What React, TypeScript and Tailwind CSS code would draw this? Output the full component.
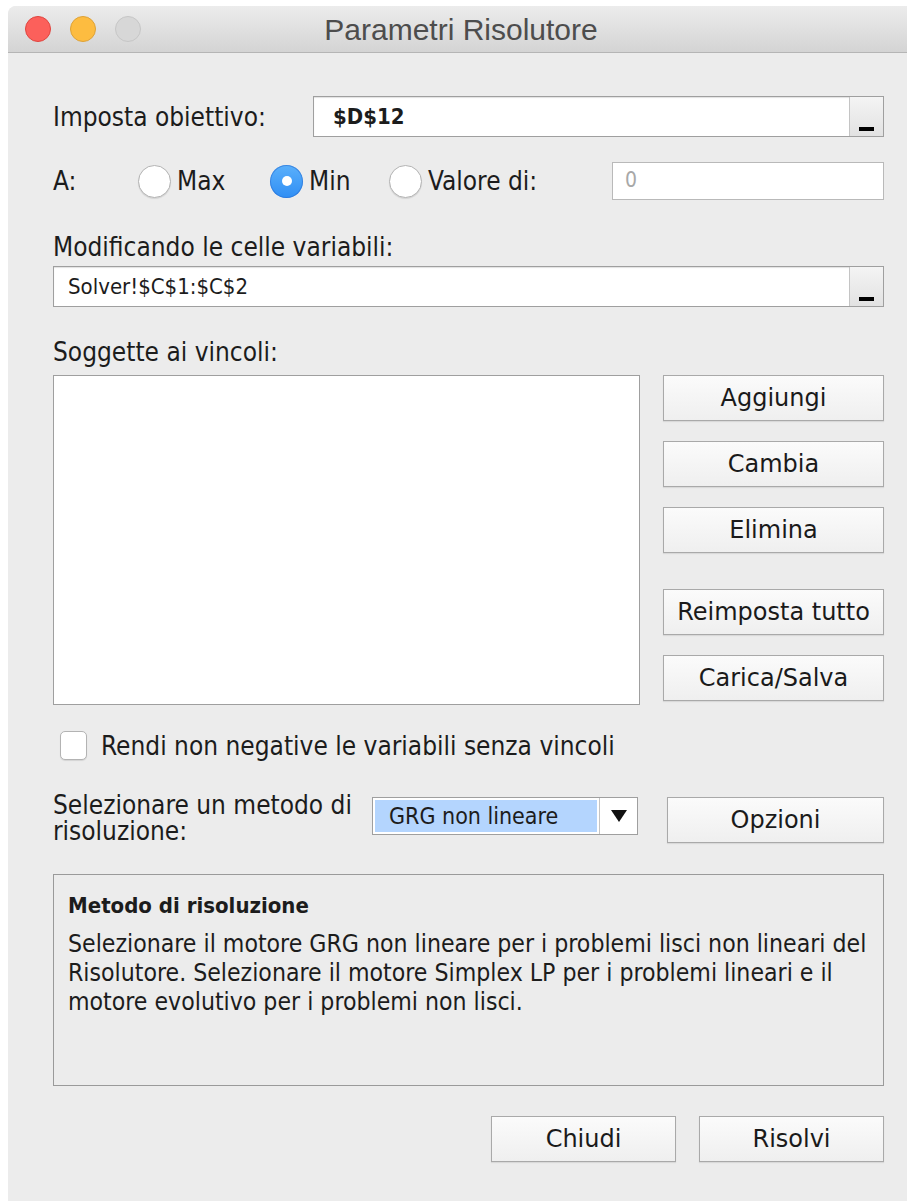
import { useState } from "react";

const label = "font-['DejaVu_Sans_Condensed','DejaVu_Sans',sans-serif] text-[26px] text-[#1c1c1c] leading-none";
const body = "font-['DejaVu_Sans_Condensed','DejaVu_Sans',sans-serif] text-[#1c1c1c]";
const btn =
  "flex items-center justify-center border border-[#a9a9a9] bg-gradient-to-b from-[#fbfbfb] to-[#efefef] shadow-[0_1px_1px_rgba(0,0,0,0.08)] font-['DejaVu_Sans',sans-serif] text-[24px] text-[#1a1a1a]";

function RefInput({ value, className, strong }: { value: string; className: string; strong?: boolean }) {
  return (
    <div className={`flex h-[41px] border border-[#9f9f9f] bg-white shadow-[inset_0_1px_1px_rgba(0,0,0,0.12)] ${className}`}>
      <div className={`flex flex-1 items-center ${strong ? "pl-[19px] font-bold" : "pl-[14px]"} ${body} text-[22px]`}>{value}</div>
      <div className="flex w-[34px] items-end justify-center border-l border-[#c4c4c4] bg-gradient-to-b from-[#f4f4f4] to-[#e2e2e2] pb-[5px]">
        <div className="h-[4px] w-[15px] bg-black" />
      </div>
    </div>
  );
}

function Radio({ checked, text, onClick, width }: { checked: boolean; text: string; onClick: () => void; width: string }) {
  return (
    <button onClick={onClick} className={`flex items-center gap-[6px] ${width}`}>
      {checked ? (
        <span className="flex h-[33px] w-[33px] shrink-0 items-center justify-center rounded-full bg-gradient-to-b from-[#5ab0fb] to-[#2f8ef4] shadow-[inset_0_0_0_1px_rgba(40,110,210,0.6)]">
          <span className="h-[10px] w-[10px] rounded-full bg-white" />
        </span>
      ) : (
        <span className="h-[33px] w-[33px] shrink-0 rounded-full border border-[#b3b3b3] bg-white shadow-[0_1px_1px_rgba(0,0,0,0.1)]" />
      )}
      <span className={label}>{text}</span>
    </button>
  );
}

export default function App() {
  const [mode, setMode] = useState<"max" | "min" | "val">("min");
  const [nonNeg, setNonNeg] = useState(false);

  return (
    <div className="min-h-[1201px] bg-white pl-[8px] pt-[6px]">
      <div className="h-[1195px] w-[899px] overflow-hidden rounded-tl-[8px] bg-[#ececec]">
        {/* title bar */}
        <div className="relative flex h-[47px] items-center border-b border-[#b5b5b5] bg-gradient-to-b from-[#ececec] to-[#d4d4d4] pl-[17px]">
          <div className="flex gap-[19px]">
            <span className="h-[26px] w-[26px] rounded-full border border-[#e0443e] bg-[#fc605b]" />
            <span className="h-[26px] w-[26px] rounded-full border border-[#dea236] bg-[#fdbc40]" />
            <span className="h-[26px] w-[26px] rounded-full border border-[#c6c6c6] bg-[#d7d7d7]" />
          </div>
          <div className="absolute inset-0 flex items-center justify-center pl-[7px] font-['Liberation_Sans',sans-serif] text-[30px] text-[#4d4d4d]">
            Parametri Risolutore
          </div>
        </div>

        <div className="pl-[45px] pr-[23px] pt-[43px]">
          {/* objective */}
          <div className="flex items-center">
            <div className={`w-[260px] ${label}`}>Imposta obiettivo:</div>
            <RefInput value="$D$12" className="flex-1" strong />
          </div>

          {/* to */}
          <div className="mt-[25px] flex h-[38px] items-center">
            <div className={`w-[85px] ${label}`}>A:</div>
            <Radio checked={mode === "max"} text="Max" onClick={() => setMode("max")} width="w-[132px]" />
            <Radio checked={mode === "min"} text="Min" onClick={() => setMode("min")} width="w-[119px]" />
            <Radio checked={mode === "val"} text="Valore di:" onClick={() => setMode("val")} width="w-[180px]" />
            <div className={`ml-auto flex h-[38px] w-[272px] items-center border border-[#b9b9b9] bg-white pl-[12px] ${body} text-[21px] text-[#a8a8a8]`}>0</div>
          </div>

          <div className={`mt-[34px] ${label}`}>Modificando le celle variabili:</div>
          <RefInput value="Solver!$C$1:$C$2" className="mt-[6px]" />

          <div className={`mt-[32px] ${label}`}>Soggette ai vincoli:</div>
          <div className="mt-[10px] flex gap-[23px]">
            <div className="h-[330px] w-[587px] border border-[#9f9f9f] bg-white" />
            <div className="flex flex-1 flex-col">
              <button className={`h-[46px] ${btn}`}>Aggiungi</button>
              <button className={`mt-[20px] h-[46px] ${btn}`}>Cambia</button>
              <button className={`mt-[20px] h-[46px] ${btn}`}>Elimina</button>
              <button className={`mt-[36px] h-[46px] ${btn}`}>Reimposta tutto</button>
              <button className={`mt-[20px] h-[46px] ${btn}`}>Carica/Salva</button>
            </div>
          </div>

          {/* non-negative checkbox */}
          <button onClick={() => setNonNeg(!nonNeg)} className="ml-[7px] mt-[26px] flex items-center gap-[14px]">
            <span className="flex h-[29px] w-[27px] items-center justify-center rounded-[5px] border border-[#b3b3b3] bg-white shadow-[0_1px_1px_rgba(0,0,0,0.1)] text-[18px]">
              {nonNeg ? "✓" : ""}
            </span>
            <span className={label}>Rendi non negative le variabili senza vincoli</span>
          </button>

          {/* solving method */}
          <div className="mt-[37px] flex items-start">
            <div className="-mt-[5px] flex w-[319px] flex-col">
              <div className={label}>Selezionare un metodo di</div>
              <div className={label}>risoluzione:</div>
            </div>
            <div className="flex h-[38px] w-[266px] border border-[#9f9f9f] bg-white">
              <div className="flex flex-1 items-center p-[2px]">
                <span className={`flex h-full flex-1 items-center bg-[#b4d5fe] pl-[14px] ${body} text-[23px]`}>GRG non lineare</span>
              </div>
              <div className="flex w-[38px] items-center justify-center border-l border-[#c4c4c4]">
                <svg width="16" height="12" viewBox="0 0 16 12">
                  <polygon points="0,0 16,0 8,12" fill="#111" />
                </svg>
              </div>
            </div>
            <button className={`ml-[29px] h-[46px] flex-1 ${btn}`}>Opzioni</button>
          </div>

          {/* description */}
          <div className="mt-[30px] h-[212px] border border-[#9a9a9a] px-[14px] pt-[20px]">
            <div className={`${body} text-[22px] font-bold leading-none`}>Metodo di risoluzione</div>
            <p className={`mt-[12px] whitespace-nowrap ${body} text-[24.6px] leading-[29px]`}>
              Selezionare il motore GRG non lineare per i problemi lisci non lineari del
              <br />
              Risolutore. Selezionare il motore Simplex LP per i problemi lineari e il
              <br />
              motore evolutivo per i problemi non lisci.
            </p>
          </div>

          <div className="mt-[30px] flex justify-end gap-[23px]">
            <button className={`h-[46px] w-[185px] ${btn}`}>Chiudi</button>
            <button className={`h-[46px] w-[185px] ${btn}`}>Risolvi</button>
          </div>
        </div>
      </div>
    </div>
  );
}
